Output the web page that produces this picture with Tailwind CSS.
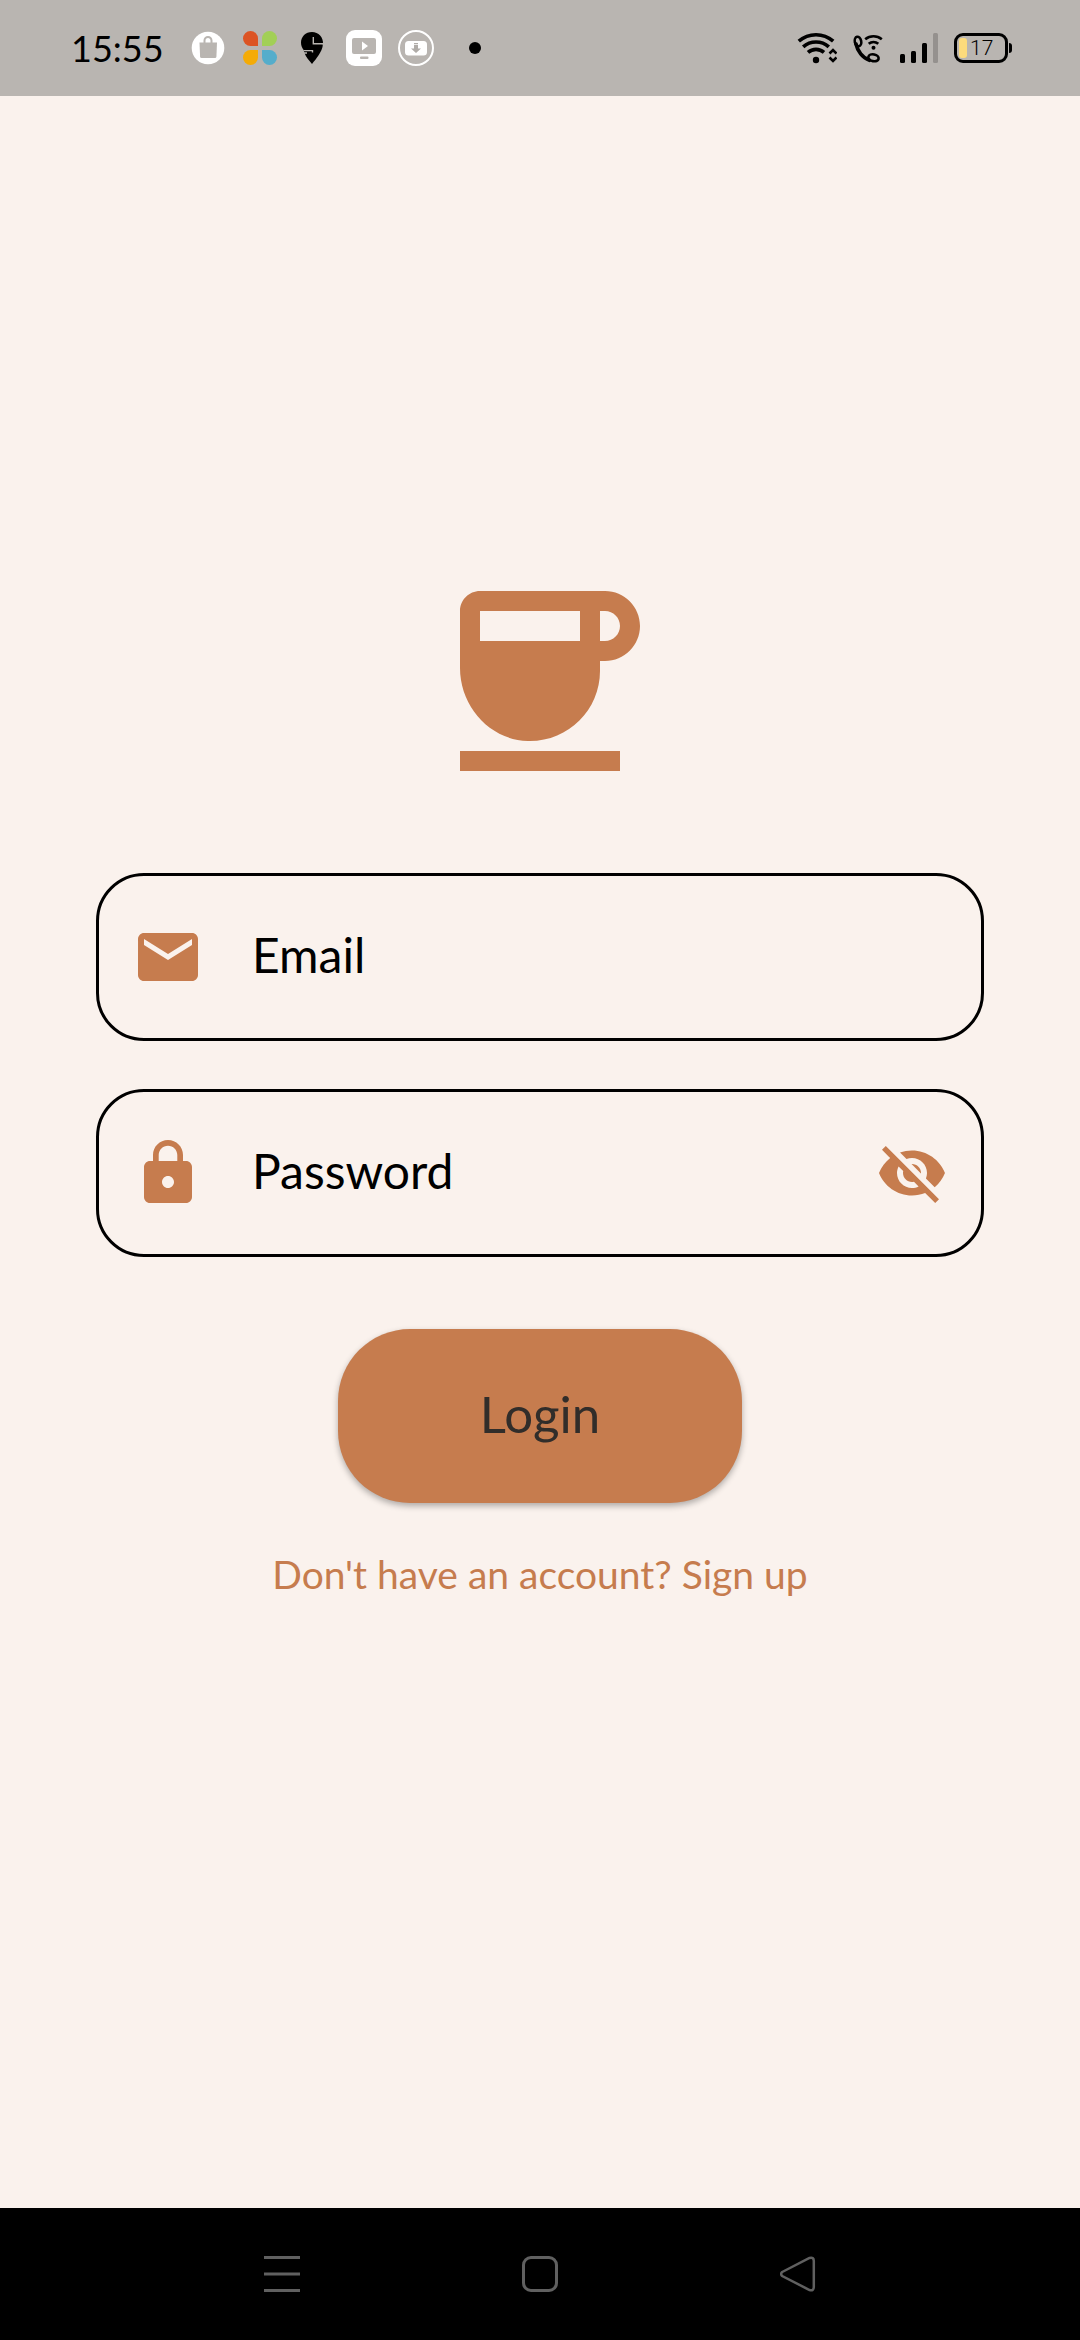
<!DOCTYPE html>
<html lang="en">
<head>
<meta charset="utf-8">
<meta name="viewport" content="width=device-width, initial-scale=1">
<title>Login</title>
<script src="https://cdn.jsdelivr.net/npm/@tailwindcss/browser@4"></script>
</head>
<body class="flex min-h-screen flex-col bg-[#faf2ed] font-['Lato',sans-serif] text-black">

<!-- Status bar -->
<header class="flex h-24 items-center justify-between bg-[#b9b5b1] pl-[71px] pr-[68px]">
  <div class="flex items-center gap-4">
    <time class="mr-[10px] text-[36px] leading-[48px]">15:55</time>
    <svg class="size-9" viewBox="0 0 36 36" aria-hidden="true">
      <circle cx="18" cy="18" r="16.300" fill="#fff"/>
      <path d="M9.500 12.500h17.500l-.6 14.500q-.2 1-1.400 1H11.500q-1.200 0-1.400-1z" fill="#b9b5b1"/>
      <path d="M14.500 13v-2.500a3.500 3.500 0 0 1 7 0V13" fill="none" stroke="#b9b5b1" stroke-width="2"/>
    </svg>
    <svg class="size-9" viewBox="0 0 36 36" aria-hidden="true">
      <path d="M16 16H8.500A7.500 7.500 0 1 1 16 8.500z" fill="#dc5424"/>
      <path d="M20 16V8.500A7.500 7.500 0 1 1 27.500 16z" fill="#a2cf56"/>
      <path d="M16 20v7.500A7.500 7.500 0 1 1 8.500 20z" fill="#f4ab07"/>
      <path d="M20 20h7.500A7.500 7.500 0 1 1 20 27.500z" fill="#55adcb"/>
    </svg>
    <svg class="size-9" viewBox="0 0 36 36" aria-hidden="true">
      <path d="M18 2C11.500 2 7 6.800 7 12.500c0 3 1 5.500 2.500 7.200l1 3.300c1.500 4 4.500 7.500 7.500 11 4.500-5.500 10-12.500 10.800-18.500q-.2-1-1.300-1H29C29.500 7 24.500 2 18 2z" fill="#000"/>
      <path d="M19.300 7v6.700h10M8.500 23h4.500M9.500 20.600h9v2" fill="none" stroke="#b9b5b1" stroke-width="1.400"/>
    </svg>
    <svg class="size-9" viewBox="0 0 36 36" aria-hidden="true">
      <rect width="36" height="36" rx="9" fill="#fff"/>
      <rect x="6" y="8" width="24" height="16" rx="2" fill="#b9b5b1"/>
      <path d="M16 11.500v9l6-4.500z" fill="#fff"/>
      <rect x="14" y="26.500" width="8.500" height="2.500" rx="1" fill="#b9b5b1"/>
    </svg>
    <svg class="size-9" viewBox="0 0 36 36" aria-hidden="true">
      <circle cx="18" cy="18" r="17" fill="none" stroke="#fff" stroke-width="2"/>
      <rect x="7" y="11" width="22" height="14.500" rx="3.500" fill="#fff"/>
      <path d="M16 13h4v1.200h-4zM16 15h4v3.500h3L18 23l-5-4.500h3z" fill="#b0aca8"/>
    </svg>
    <span class="ml-[19px] size-3 rounded-full bg-black"></span>
  </div>
  <div class="flex items-center gap-[15px]">
    <svg class="h-9 w-10" viewBox="0 0 40 36" aria-hidden="true">
      <g fill="none" stroke="#000" stroke-width="3.600">
        <path d="M1.800 11.200a26 26 0 0 1 34.400 0"/>
        <path d="M6.200 16.900a19 19 0 0 1 25.600 0"/>
        <path d="M11 22.400a12 12 0 0 1 16 0"/>
      </g>
      <circle cx="19" cy="30" r="3.200" fill="#000"/>
      <path d="M32.500 23.500l3.500-3.500 3.500 3.500M32.500 27.500l3.500 3.500 3.500-3.500" fill="none" stroke="#000" stroke-width="2.600"/>
    </svg>
    <svg class="h-9 w-8" viewBox="0 0 32 36" aria-hidden="true">
      <g fill="none" stroke="#000" stroke-width="2.600" stroke-linecap="round">
        <ellipse cx="6" cy="11.500" rx="3.200" ry="4.800" transform="rotate(-12 6 11.500)"/>
        <ellipse cx="21.500" cy="27.800" rx="5.200" ry="3.400" transform="rotate(12 21.500 27.800)"/>
        <path d="M4 14C5.500 21 10.500 28 17.500 30.300" stroke-width="3.600"/>
      </g>
      <g fill="none" stroke="#000" stroke-width="2.600">
        <path d="M13.200 9.300a13 13 0 0 1 16.600 0"/>
        <path d="M16.700 13.800a7.500 7.500 0 0 1 9.600 0"/>
      </g>
      <circle cx="21.500" cy="17.800" r="2" fill="#000"/>
    </svg>
    <svg class="h-9 w-10" viewBox="0 0 40 36" aria-hidden="true">
      <rect x="1" y="24" width="5" height="9" rx="1.500"/>
      <rect x="12" y="21" width="5" height="12" rx="1.500"/>
      <rect x="23" y="13" width="5" height="20" rx="1.500"/>
      <rect x="34" y="3" width="5" height="30" rx="1.500" fill="#95918e"/>
    </svg>
    <div class="flex items-center gap-px">
      <div class="flex h-[30px] w-[54px] items-center gap-[3px] rounded-[9px] border-[3px] border-black pl-0.5">
        <span class="h-5 w-2 rounded-[3px] bg-[#fddb7c]"></span>
        <span class="font-['Roboto',sans-serif] text-[21px] font-light leading-6">17</span>
      </div>
      <span class="h-[10px] w-[3px] rounded-r-sm bg-black"></span>
    </div>
  </div>
</header>

<!-- Login form -->
<main class="flex flex-1 flex-col items-center justify-center px-24 pb-[134px]">
  <svg class="size-60 text-[#c67c4e]" viewBox="0 0 24 24" fill="currentColor" aria-hidden="true">
    <path d="M18.500 3H6c-1.100 0-2 .9-2 2v5.710c0 3.830 2.950 7.180 6.780 7.290 3.960.12 7.220-3.060 7.220-7v-1h.5c1.930 0 3.500-1.570 3.500-3.500S20.430 3 18.500 3zM16 5v3H6V5h10zm2.500 3H18V5h.5c.83 0 1.500.67 1.500 1.500S19.330 8 18.500 8zM4 19h16v2H4v-2z"/>
  </svg>
  <form class="mt-[72px] flex w-full flex-col items-center">
    <div class="flex h-[168px] w-full items-center gap-12 rounded-[48px] border-[3px] border-black px-[33px]">
      <label for="email" class="shrink-0 text-[#c67c4e]">
        <svg class="size-[72px]" viewBox="0 0 24 24" fill="currentColor" role="img" aria-label="Email">
          <path d="M20 4H4c-1.100 0-1.990.9-1.990 2L2 18c0 1.100.9 2 2 2h16c1.100 0 2-.9 2-2V6c0-1.100-.9-2-2-2zm0 4l-8 5-8-5V6l8 5 8-5v2z"/>
        </svg>
      </label>
      <input id="email" type="email" placeholder="Email" class="h-[72px] min-w-0 flex-1 bg-transparent pb-1 text-[48px] outline-none placeholder:text-black">
    </div>
    <div class="mt-12 flex h-[168px] w-full items-center gap-12 rounded-[48px] border-[3px] border-black px-[33px]">
      <label for="password" class="shrink-0 text-[#c67c4e]">
        <svg class="size-[72px]" viewBox="0 0 24 24" fill="currentColor" role="img" aria-label="Password">
          <path d="M18 8h-1V6c0-2.760-2.240-5-5-5S7 3.240 7 6v2H6c-1.100 0-2 .9-2 2v10c0 1.100.9 2 2 2h12c1.100 0 2-.9 2-2V10c0-1.100-.9-2-2-2zm-6 9c-1.100 0-2-.9-2-2s.9-2 2-2 2 .9 2 2-.9 2-2 2zm3.100-9H8.900V6c0-1.710 1.390-3.100 3.100-3.100s3.100 1.390 3.100 3.100v2z"/>
        </svg>
      </label>
      <input id="password" type="password" placeholder="Password" class="h-[72px] min-w-0 flex-1 bg-transparent pb-1 text-[48px] outline-none placeholder:text-black">
      <button type="button" aria-label="Show password" class="shrink-0 text-[#c67c4e]">
        <svg class="size-[72px]" viewBox="0 0 24 24" fill="currentColor" aria-hidden="true">
          <path d="M12 7c2.760 0 5 2.240 5 5 0 .65-.13 1.260-.36 1.830l2.920 2.920c1.510-1.260 2.700-2.890 3.430-4.750-1.730-4.390-6-7.500-11-7.500-1.400 0-2.740.25-3.980.7l2.160 2.160C10.740 7.130 11.350 7 12 7zM2 4.270l2.280 2.280.46.46C3.080 8.300 1.780 10.020 1 12c1.730 4.390 6 7.500 11 7.500 1.550 0 3.030-.3 4.380-.84l.42.42L19.730 22 21 20.730 3.270 3 2 4.270zM7.530 9.800l1.550 1.550c-.05.21-.08.43-.08.65 0 1.660 1.340 3 3 3 .22 0 .44-.03.65-.08l1.550 1.550c-.67.33-1.410.53-2.200.53-2.760 0-5-2.240-5-5 0-.79.2-1.530.53-2.200zm4.310-.78l3.150 3.150.02-.16c0-1.660-1.340-3-3-3l-.17.01z"/>
        </svg>
      </button>
    </div>
    <button type="submit" class="mt-[72px] h-[174px] w-[404px] rounded-[72px] bg-[#c67c4e] pb-1 text-[51px] text-[#312d2a] shadow-[0_3px_6px_rgba(0,0,0,0.3)]">Login</button>
  </form>
  <a href="#signup" class="mt-9 py-2 text-[39px] leading-[54px] text-[#c67c4e]">Don't have an account? Sign up</a>
</main>

<!-- System navigation -->
<nav class="flex h-[132px] items-center justify-center gap-[222px] bg-black text-[#606060]" aria-label="System">
  <button type="button" aria-label="Recent apps">
    <svg class="size-9" viewBox="0 0 36 36" fill="none" stroke="currentColor" stroke-width="3"><path d="M0 1.500h36M0 18h36M0 34.500h36"/></svg>
  </button>
  <button type="button" aria-label="Home">
    <svg class="size-9" viewBox="0 0 36 36" fill="none" stroke="currentColor" stroke-width="3"><rect x="1.500" y="1.500" width="33" height="33" rx="7.500"/></svg>
  </button>
  <button type="button" aria-label="Back">
    <svg class="size-9" viewBox="0 0 36 36" fill="none" stroke="currentColor" stroke-width="2.500"><path d="M2.200 16L29.500 2Q33.800 .8 33.800 5V31Q33.800 35.200 29.500 34L2.200 20Q0 18 2.200 16z"/></svg>
  </button>
</nav>
</body>
</html>
